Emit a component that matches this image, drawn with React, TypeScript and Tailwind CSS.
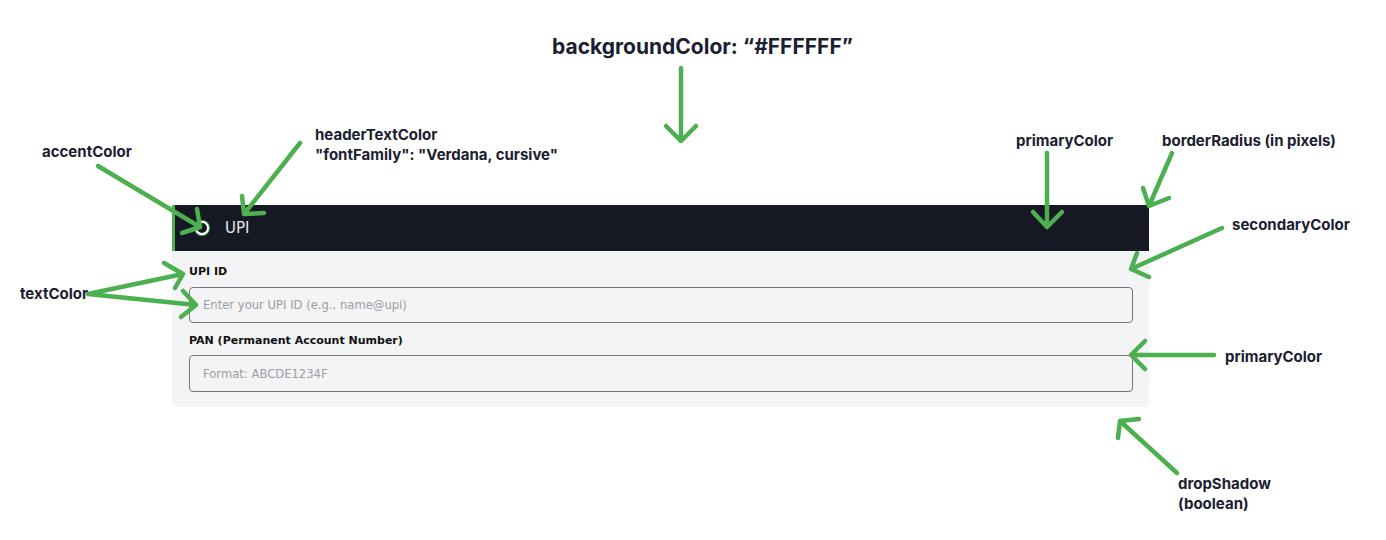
import React from 'react'

const G = '#4caf50'

function Arrow({ d }: { d: string }) {
  return <path d={d} fill="none" stroke={G} strokeWidth={4.5} strokeLinecap="round" strokeLinejoin="round" />
}

// callout text, placed on the diagram canvas
function Note({ x, y, lines, big }: { x: number; y: number; lines: string[]; big?: boolean }) {
  return (
    <div
      className={`absolute font-bold text-[#1b2030] whitespace-nowrap ${big ? 'text-[21px] leading-7' : 'text-[15px] leading-5'}`}
      style={{ left: x, top: y, fontFamily: 'Inter, "Liberation Sans", sans-serif' }}
    >
      {lines.map(l => <div key={l}>{l}</div>)}
    </div>
  )
}

export default function App() {
  const formFont = { fontFamily: '"DejaVu Sans", Verdana, sans-serif' }
  return (
    <div className="relative w-[1386px] h-[540px] bg-white overflow-hidden pt-[205px] pl-[172px]">
      <div className="w-[977px] rounded-b-[4px] shadow-[0_1px_2px_rgba(0,0,0,0.04)]" style={formFont}>
        <div className="h-[46px] bg-[#161924] border-l-[3px] border-[#4caf50] flex items-center pl-[20px] gap-[16px]">
          <span className="w-[14px] h-[14px] rounded-full border-2 border-white ring-1 ring-[#4caf50] bg-[#161924]" />
          <span className="text-[15px] text-[#e5e7eb]">UPI</span>
        </div>
        <div className="bg-[#f3f4f6] rounded-b-[4px] pl-[17px] pr-4 pt-[13px] pb-[14px] flex flex-col">
          <label className="text-[11px] leading-4 font-bold text-[#111]">UPI ID</label>
          <input
            className="mt-[7px] h-[36px] rounded-[4px] border-[1.5px] border-[#73777f] bg-transparent px-[13px] text-[11.6px] placeholder:text-[#9a9ea6] outline-none"
            placeholder="Enter your UPI ID (e.g., name@upi)"
            style={formFont}
          />
          <label className="mt-[10px] text-[11px] leading-4 font-bold text-[#111]">PAN (Permanent Account Number)</label>
          <input
            className="mt-[6px] h-[37px] rounded-[4px] border-[1.5px] border-[#73777f] bg-transparent px-[13px] text-[11.6px] placeholder:text-[#9a9ea6] outline-none"
            placeholder="Format: ABCDE1234F"
            style={formFont}
          />
        </div>
      </div>

      <svg className="absolute inset-0 pointer-events-none" width={1386} height={540}>
        <Arrow d="M681 68 L681 141 M666 126 L681 141 L696 126" />
        <Arrow d="M98 166 L200 227 M197 209 L200 227 L182 233" />
        <Arrow d="M300 143 L244 214 M242 196 L244 214 L264 213" />
        <Arrow d="M1047 153 L1047 227 M1033 212 L1047 227 L1062 212" />
        <Arrow d="M1172 153 L1149 206 M1143 188 L1149 206 L1169 198" />
        <Arrow d="M1222 228 L1131 269 M1137 253 L1131 269 L1149 277" />
        <Arrow d="M88 294 L183 274 M164 263 L183 274 L175 288 M88 294 L196 305 M183 291 L196 305 L181 317" />
        <Arrow d="M1214 355 L1131 355 M1145 341 L1131 355 L1145 369" />
        <Arrow d="M1177 473 L1120 421 M1139 419 L1120 421 L1118 438" />
      </svg>

      <Note x={552} y={33} lines={['backgroundColor: “#FFFFFF”']} big />
      <Note x={42} y={142} lines={['accentColor']} />
      <Note x={315} y={125} lines={['headerTextColor', '"fontFamily": "Verdana, cursive"']} />
      <Note x={1016} y={131} lines={['primaryColor']} />
      <Note x={1162} y={131} lines={['borderRadius (in pixels)']} />
      <Note x={1232} y={215} lines={['secondaryColor']} />
      <Note x={20} y={284} lines={['textColor']} />
      <Note x={1225} y={347} lines={['primaryColor']} />
      <Note x={1178} y={474} lines={['dropShadow', '(boolean)']} />
    </div>
  )
}
